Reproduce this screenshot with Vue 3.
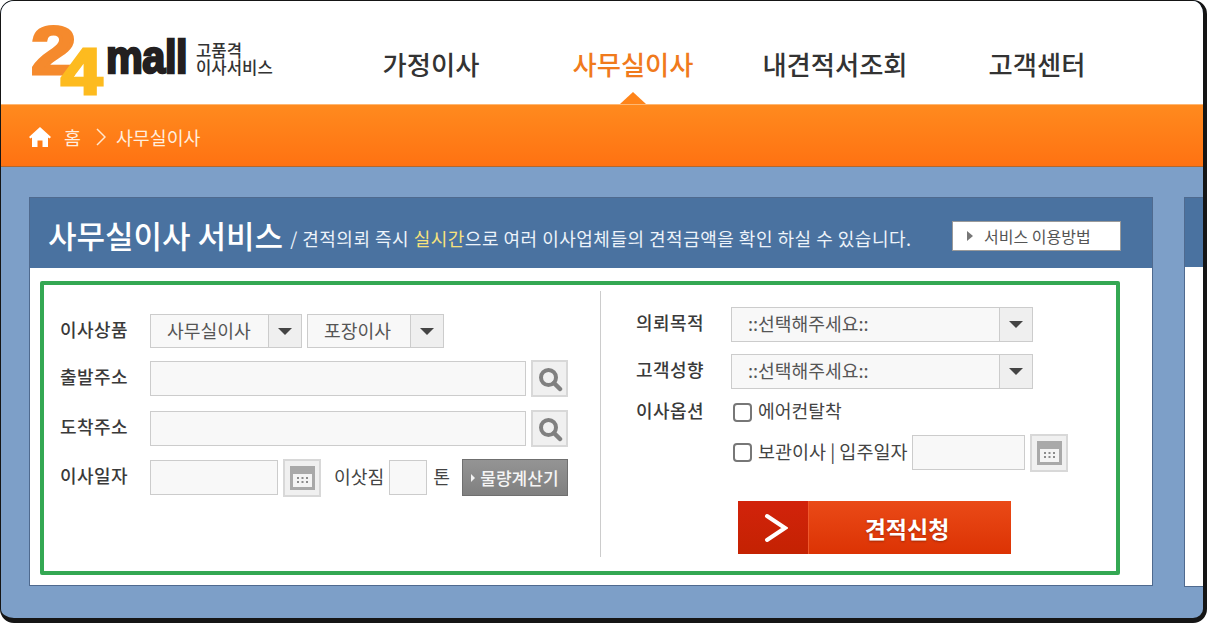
<template>
  <div class="frame">
    <header class="top">
      <div class="logo">
        <span class="logo-two">2</span>
        <span class="logo-four">4</span>
        <span class="logo-mall">mall</span>
        <span class="logo-sub"><b>고품격</b><b>이사서비스</b></span>
      </div>
      <nav class="nav">
        <a v-for="item in navItems" :key="item.label" :class="{ on: item.active }">{{ item.label }}</a>
      </nav>
      <i class="nav-notch"></i>
    </header>

    <div class="crumb">
      <svg class="home" width="22" height="20" viewBox="0 0 22 20">
        <path d="M11 0 L0 10 L1.5 11.5 L3 10.4 V20 H8.5 V13.5 H13.5 V20 H19 V10.4 L20.5 11.500 L22 10 Z" fill="#fff" />
      </svg>
      <span>홈</span>
      <svg class="crumb-arrow" width="10" height="18" viewBox="0 0 10 18">
        <path d="M1 1 L9 9 L1 17" fill="none" stroke="#ffe6cf" stroke-width="1.5" />
      </svg>
      <span>사무실이사</span>
    </div>

    <main class="stage">
      <section class="panel">
        <div class="panel-head">
          <h1>사무실이사 서비스</h1>
          <p>/ 견적의뢰 즉시 <em>실시간</em>으로 여러 이사업체들의 견적금액을 확인 하실 수 있습니다.</p>
          <a class="howto"><i class="tri"></i>서비스 이용방법</a>
        </div>

        <div class="green">
          <div class="cols">
            <div class="col-left">
              <div class="row row-first">
                <label>이사상품</label>
                <div class="select s-type"><span>사무실이사</span><i class="caret"><b></b></i></div>
                <div class="select s-pack"><span>포장이사</span><i class="caret"><b></b></i></div>
              </div>
              <div class="row">
                <label>출발주소</label>
                <div class="field f-addr"></div>
                <button class="icon-btn">
                  <svg width="26" height="26" viewBox="0 0 26 26"><circle cx="11.5" cy="11.5" r="7.5" fill="none" stroke="#808080" stroke-width="4" /><path d="M17 17 L23 23" stroke="#808080" stroke-width="4.5" stroke-linecap="round" /></svg>
                </button>
              </div>
              <div class="row">
                <label>도착주소</label>
                <div class="field f-addr"></div>
                <button class="icon-btn">
                  <svg width="26" height="26" viewBox="0 0 26 26"><circle cx="11.5" cy="11.5" r="7.5" fill="none" stroke="#808080" stroke-width="4" /><path d="M17 17 L23 23" stroke="#808080" stroke-width="4.5" stroke-linecap="round" /></svg>
                </button>
              </div>
              <div class="row row-last">
                <label>이사일자</label>
                <div class="field f-date"></div>
                <button class="icon-btn cal">
                  <svg width="25" height="24" viewBox="0 0 25 24"><rect width="25" height="24" fill="#a9a9a9" /><rect x="3" y="8" width="19" height="13" fill="#f4f4f4" /><path d="M7 11h2v2H7zM11.500 11h2v2h-2zM16 11h2v2h-2zM7 15h2v2H7zM11.500 15h2v2h-2zM16 15h2v2h-2z" fill="#8c8c8c" /></svg>
                </button>
                <span class="txt load-label">이삿짐</span>
                <div class="field f-ton"></div>
                <span class="txt ton">톤</span>
                <a class="calc"><i></i>물량계산기</a>
              </div>
            </div>

            <div class="col-right">
              <div class="row-r">
                <label>의뢰목적</label>
                <div class="select s-wide"><span>::선택해주세요::</span><i class="caret"><b></b></i></div>
              </div>
              <div class="row-r r-gap">
                <label>고객성향</label>
                <div class="select s-wide"><span>::선택해주세요::</span><i class="caret"><b></b></i></div>
              </div>
              <div class="row-r r-opt">
                <label>이사옵션</label>
                <input type="checkbox" class="chk" />
                <span class="txt">에어컨탈착</span>
              </div>
              <div class="row-r r-store">
                <input type="checkbox" class="chk" />
                <span class="txt">보관이사 | 입주일자</span>
                <div class="field f-move"></div>
                <button class="icon-btn cal">
                  <svg width="25" height="24" viewBox="0 0 25 24"><rect width="25" height="24" fill="#a9a9a9" /><rect x="3" y="8" width="19" height="13" fill="#f4f4f4" /><path d="M7 11h2v2H7zM11.500 11h2v2h-2zM16 11h2v2h-2zM7 15h2v2H7zM11.500 15h2v2h-2zM16 15h2v2h-2z" fill="#8c8c8c" /></svg>
                </button>
              </div>
              <a class="submit">
                <span class="submit-arrow">
                  <svg width="24" height="30" viewBox="0 0 24 30"><path d="M3 3 L21 15 L3 27" fill="none" stroke="#fff" stroke-width="4" stroke-linecap="round" /></svg>
                </span>
                <span class="submit-text">견적신청</span>
              </a>
            </div>
          </div>
        </div>
      </section>

      <section class="panel-next"><div class="next-head"></div></section>
    </main>
  </div>
</template>

<script setup>
const navItems = [
  { label: '가정이사' },
  { label: '사무실이사', active: true },
  { label: '내견적서조회' },
  { label: '고객센터' }
]
</script>

<style>
html, body {
  margin: 0;
  background: #fff;
}
</style>

<style scoped>
* {
  box-sizing: border-box;
}
.frame {
  width: 1207px;
  height: 623px;
  overflow: hidden;
  display: flex;
  flex-direction: column;
  border-style: solid;
  border-color: #151515;
  border-width: 1px 4px 5px 1px;
  border-radius: 14px;
  font-family: "Noto Sans CJK KR", "Noto Sans", sans-serif;
  color: #333;
  background: #7d9fc8;
}

.top {
  position: relative;
  flex: none;
  height: 103px;
  background: #fff;
  display: flex;
}
.logo {
  position: relative;
  width: 329px;
  flex: none;
}
.logo span {
  position: absolute;
  font-family: "Liberation Sans", sans-serif;
  font-weight: 700;
  line-height: 1;
}
.logo-two {
  left: 30px;
  top: 15px;
  font-size: 68px;
  color: #f58a2d;
  -webkit-text-stroke: 3px #f58a2d;
  transform: scaleX(1.2);
  transform-origin: left top;
}
.logo-four {
  left: 60px;
  top: 39px;
  font-size: 64px;
  color: #fdbb1f;
  -webkit-text-stroke: 3px #fdbb1f;
  transform: scaleX(1.16);
  transform-origin: left top;
}
.logo-mall {
  left: 105px;
  top: 33px;
  font-size: 46px;
  letter-spacing: -.5px;
  color: #231f20;
  -webkit-text-stroke: 2.4px #231f20;
  transform: scaleX(.9);
  transform-origin: left top;
}
.logo .logo-sub {
  left: 195px;
  top: 41px;
  display: flex;
  flex-direction: column;
  font-family: "Noto Sans CJK KR", sans-serif;
  font-size: 16.7px;
  line-height: 17px;
  color: #333;
  white-space: nowrap;
}
.logo-sub b {
  font-weight: 500;
}
.nav {
  display: grid;
  grid-template-columns: repeat(4, 202px);
  align-items: center;
  height: 100%;
  padding-top: 22px;
}
.nav a {
  text-align: center;
  font-size: 26.3px;
  font-weight: 500;
  color: #333;
  white-space: nowrap;
}
.nav a.on {
  color: #f07a1c;
}
.nav-notch {
  position: absolute;
  left: 619px;
  bottom: 0;
  border-left: 13px solid transparent;
  border-right: 13px solid transparent;
  border-bottom: 12px solid #ff8419;
}

.crumb {
  flex: none;
  height: 63px;
  display: flex;
  align-items: center;
  padding: 2px 0 0 28px;
  background: linear-gradient(#ff8a1e, #ff7212);
  border-top: 1px solid #ffb772;
  border-bottom: 1px solid #b2682f;
  color: #ffeede;
  font-size: 18.4px;
}
.home {
  margin-right: 13px;
}
.crumb-arrow {
  margin: 0 10px 0 15px;
}

.stage {
  flex: 1;
  display: flex;
  gap: 31px;
  padding: 30px 0 0 28px;
  overflow: hidden;
}
.panel {
  flex: none;
  width: 1124px;
  height: 389px;
  background: #fff;
  border: 1px solid #4f6a8f;
}
.panel-head {
  height: 70px;
  display: flex;
  align-items: center;
  padding: 0 31px 0 18px;
  background: #4a72a0;
  color: #fff;
}
.panel-head h1 {
  margin: 3px 0 0;
  font-size: 31px;
  font-weight: 500;
  white-space: nowrap;
}
.panel-head p {
  margin: 9px 0 0 7px;
  font-size: 18px;
  letter-spacing: .5px;
  white-space: nowrap;
  color: #edf3fa;
}
.panel-head em {
  font-style: normal;
  color: #f7e27c;
}
.howto {
  margin-left: auto;
  width: 169px;
  height: 30px;
  display: flex;
  flex: none;
  align-items: center;
  padding-left: 14px;
  margin-top: 6px;
  background: #fff;
  border: 1px solid #9a9a9a;
  color: #555;
  font-size: 16px;
}
.tri {
  margin-right: 11px;
  border-left: 6px solid #777;
  border-top: 5px solid transparent;
  border-bottom: 5px solid transparent;
}

.green {
  margin: 13px 0 0 10px;
  width: 1080px;
  height: 294px;
  border: 4px solid #34a853;
  border-radius: 2px;
}
.cols {
  display: flex;
  margin-top: 6px;
  height: 266px;
}
.col-left {
  width: 557px;
  padding: 23px 0 0 16px;
  border-right: 1px solid #ccc;
}
.col-right {
  padding: 16px 0 0 35px;
}
label {
  flex: none;
  padding-bottom: 5px;
  font-size: 18px;
  letter-spacing: .4px;
  font-weight: 500;
  color: #3a3a3a;
}
.row {
  display: flex;
  align-items: center;
  height: 37px;
  margin-top: 13px;
}
.row > label {
  width: 90px;
}
.row-first {
  height: 34px;
  margin-top: 0;
}
.row-first + .row {
  margin-top: 12px;
}
.row-last {
  margin-top: 12px;
  align-items: flex-start;
}
.row-last .field {
  margin-top: 1px;
}
.row-last > label {
  align-self: center;
}
.row-last > .txt {
  align-self: center;
}
.txt {
  padding-bottom: 4px;
  font-size: 18.2px;
  color: #444;
  white-space: nowrap;
}
.r-store .txt {
  font-size: 18.5px;
}

.field, .select {
  height: 35px;
  background: #f8f8f8;
  border: 1px solid #ccc;
}
.select {
  display: flex;
  align-items: center;
  font-size: 18.2px;
  color: #555;
}
.select span {
  flex: 1;
  padding: 0 0 3px 16px;
  white-space: nowrap;
}
.caret {
  flex: none;
  width: 33px;
  height: 100%;
  display: flex;
  align-items: center;
  justify-content: center;
  background: #efefef;
  border-left: 1px solid #ccc;
}
.caret b {
  border-top: 7px solid #444;
  border-left: 7px solid transparent;
  border-right: 7px solid transparent;
}
.s-type {
  width: 152px;
  height: 34px;
}
.s-pack {
  width: 137px;
  height: 34px;
  margin-left: 5px;
}
.s-wide {
  width: 302px;
}
.f-addr {
  width: 376px;
}
.f-date {
  width: 128px;
}
.f-ton {
  width: 38px;
  margin: 1px 6px 0 5px;
}
.f-move {
  width: 113px;
  margin-left: 5px;
}
.icon-btn {
  flex: none;
  width: 37px;
  height: 37px;
  margin-left: 5px;
  padding: 0;
  display: flex;
  align-items: center;
  justify-content: center;
  background: #f0f0f0;
  border: 2px solid #d8d8d8;
}
.icon-btn.cal {
  width: 38px;
  height: 38px;
}
.load-label {
  margin-left: 13px;
}
.calc {
  flex: none;
  width: 106px;
  height: 37px;
  margin-left: 12px;
  display: flex;
  align-items: center;
  justify-content: center;
  gap: 5px;
  background: linear-gradient(#949494, #808080);
  border: 1px solid #6f6f6f;
  color: #f5f5f5;
  font-size: 17px;
  font-weight: 500;
  white-space: nowrap;
}
.calc i {
  border-left: 4px solid #f2f2f2;
  border-top: 4px solid transparent;
  border-bottom: 4px solid transparent;
}

.row-r {
  display: flex;
  align-items: center;
}
.row-r > label {
  width: 95px;
}
.r-gap {
  margin-top: 12px;
}
.r-opt {
  margin-top: 10px;
  height: 26px;
}
.chk {
  appearance: none;
  flex: none;
  width: 19px;
  height: 19px;
  margin: 0 6px 0 2px;
  background: #fff;
  border: 2px solid #777;
  border-radius: 4px;
}
.r-store {
  margin-top: 9px;
  padding-left: 95px;
  height: 37px;
}
.submit {
  margin: 30px 0 0 102px;
  width: 273px;
  height: 53px;
  display: flex;
  color: #fff;
}
.submit-arrow {
  flex: none;
  width: 71px;
  display: flex;
  align-items: center;
  justify-content: center;
  padding-left: 6px;
  background: linear-gradient(#d2230b, #c42202);
  border-right: 1px solid #f0582c;
}
.submit-text {
  flex: 1;
  display: flex;
  align-items: center;
  justify-content: center;
  padding-right: 6px;
  background: linear-gradient(#ea4a17, #dc3304);
  font-size: 23px;
  font-weight: 700;
  text-shadow: 0 1px 2px rgba(120, 30, 0, .6);
}

.panel-next {
  flex: none;
  width: 60px;
  height: 390px;
  background: #fff;
  border: 1px solid #4f6a8f;
}
.next-head {
  height: 69px;
  background: #4a72a0;
}
</style>
